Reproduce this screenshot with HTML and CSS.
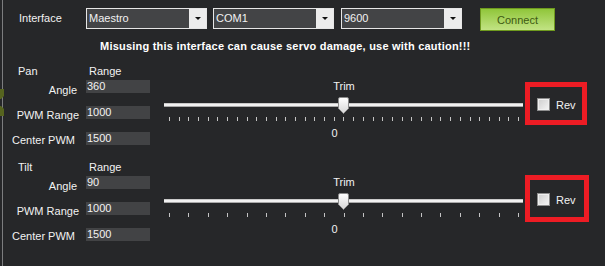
FILE: index.html
```html
<!DOCTYPE html>
<html lang="en">
<head>
    <meta charset="UTF-8">
    <title>Antenna Tracker</title>
    <link rel="stylesheet" href="styles.css">
</head>
<body>
    <div class="page">
        <div class="edge">
            <svg width="4" height="266" viewBox="0 0 4 266">
                <rect x="2" y="0" width="1" height="266" fill="#7c7d7f"/>
                <path d="M0 89 H4 V96 L1 99 H0 Z" fill="#56641f"/>
                <path d="M0 106 H1 L4 109 V116 H0 Z" fill="#56641f"/>
            </svg>
        </div>
        <div class="main">
            <div class="toolbar">
                <span class="iface">Interface</span>
                <div class="combo"><span>Maestro</span><i class="drop"></i></div>
                <div class="combo"><span>COM1</span><i class="drop"></i></div>
                <div class="combo"><span>9600</span><i class="drop"></i></div>
                <button class="connect">Connect</button>
            </div>
            <p class="warning">Misusing this interface can cause servo damage, use with caution!!!</p>

            <!-- Pan axis -->
            <section class="axis">
                <div class="fields">
                    <div class="head"><span>Pan</span><span>Range</span></div>
                    <div class="row"><label class="angle">Angle</label><div class="field">360</div></div>
                    <div class="row"><label class="pwm">PWM Range</label><div class="field">1000</div></div>
                    <div class="row"><label class="center">Center PWM</label><div class="field">1500</div></div>
                </div>
                <div class="trim">
                    <div class="trim-label">Trim</div>
                    <div class="slider">
                        <div class="track"></div>
                        <svg class="thumb" width="11" height="17" viewBox="0 0 11 17">
                            <defs>
                                <linearGradient id="thumbFill" x1="0" y1="0" x2="0" y2="1">
                                    <stop offset="0" stop-color="#ffffff"/>
                                    <stop offset="1" stop-color="#d6d6d6"/>
                                </linearGradient>
                            </defs>
                            <path d="M0.5 2 Q0.5 0.5 2 0.5 H9 Q10.5 0.5 10.5 2 V11.5 L5.5 16.5 L0.5 11.5 Z" fill="url(#thumbFill)" stroke="#8b8b8b"/>
                        </svg>
                    </div>
                    <div class="ticks pan-ticks"></div>
                    <div class="value">0</div>
                </div>
                <div class="rev rev-pan"><span class="check"></span>Rev</div>
            </section>

            <!-- Tilt axis -->
            <section class="axis">
                <div class="fields">
                    <div class="head"><span>Tilt</span><span>Range</span></div>
                    <div class="row"><label class="angle">Angle</label><div class="field">90</div></div>
                    <div class="row"><label class="pwm">PWM Range</label><div class="field">1000</div></div>
                    <div class="row"><label class="center">Center PWM</label><div class="field">1500</div></div>
                </div>
                <div class="trim">
                    <div class="trim-label">Trim</div>
                    <div class="slider">
                        <div class="track"></div>
                        <svg class="thumb" width="11" height="17" viewBox="0 0 11 17">
                            <path d="M0.5 2 Q0.5 0.5 2 0.5 H9 Q10.5 0.5 10.5 2 V11.5 L5.5 16.5 L0.5 11.5 Z" fill="url(#thumbFill)" stroke="#8b8b8b"/>
                        </svg>
                    </div>
                    <div class="ticks tilt-ticks"></div>
                    <div class="value">0</div>
                </div>
                <div class="rev rev-tilt"><span class="check"></span>Rev</div>
            </section>
        </div>
    </div>
</body>
</html>
```

FILE: styles.css
```css
body {
    margin: 0;
    background-color: #262729;
    color: #f2f2f2;
    font-family: 'Liberation Sans', Arial, sans-serif;
    font-size: 11px;
    overflow: hidden;
}
.page {
    display: flex;
    width: 605px;
    height: 266px;
}
.edge {
    width: 4px;
    flex: none;
}
.edge svg {
    display: block;
}
.main {
    flex: 1;
    padding-top: 8px;
}
.toolbar {
    display: flex;
    align-items: flex-start;
    padding-left: 15px;
    height: 23px;
}
.iface {
    width: 67px;
    line-height: 21px;
}
.combo {
    width: 121px;
    height: 21px;
    box-sizing: border-box;
    border: 1px solid #e6e6e6;
    background: #434446;
    display: flex;
    margin-right: 6px;
}
.combo + .combo {
    width: 121px;
    margin-right: 7px;
}
.combo + .combo + .combo {
    margin-right: 18px;
}
.combo span {
    flex: 1;
    line-height: 19px;
    padding-left: 2px;
}
.drop {
    width: 17px;
    background: #ececec;
    position: relative;
}
.drop::after {
    content: '';
    position: absolute;
    left: 6px;
    top: 8px;
    border-left: 3px solid transparent;
    border-right: 3px solid transparent;
    border-top: 3px solid #111;
}
.connect {
    width: 75px;
    height: 23px;
    margin: 0;
    padding: 0;
    border: 1px solid #6f9a1e;
    background: linear-gradient(#90c63a, #c2e384);
    color: #3e5a12;
    font-family: inherit;
    font-size: 11px;
}
.warning {
    margin: 8px 0 0 96px;
    font-weight: bold;
    line-height: 14px;
    letter-spacing: 0.22px;
    color: #ffffff;
}
.axis {
    display: flex;
    align-items: flex-start;
    margin-top: 11px;
    height: 94px;
}
.axis + .axis {
    margin-top: 2px;
}
.fields {
    width: 146px;
}
.head {
    display: grid;
    grid-template-columns: 82px 64px;
    line-height: 14px;
    margin-bottom: 2px;
}
.head span:first-child {
    padding-left: 14px;
}
.head span:last-child {
    padding-left: 3px;
}
.row {
    display: flex;
    height: 26px;
}
.row label {
    width: 82px;
    box-sizing: border-box;
    text-align: right;
    line-height: 14px;
    padding-top: 3px;
}
.row label.angle {
    padding-right: 9px;
}
.row label.pwm {
    padding-right: 7px;
    padding-top: 2px;
}
.row label.center {
    padding-right: 11px;
    padding-top: 1px;
}
.field {
    width: 64px;
    height: 13px;
    line-height: 13px;
    background: #424345;
    padding-left: 1px;
    box-sizing: border-box;
    overflow: hidden;
}
.trim {
    width: 359px;
    margin-left: 14px;
    padding-top: 15px;
}
.trim-label {
    text-align: center;
    line-height: 14px;
    padding-left: 1px;
}
.slider {
    position: relative;
    height: 16px;
    margin-top: 4px;
}
.track {
    position: absolute;
    left: 0;
    right: 0;
    top: 6px;
    height: 4px;
    box-sizing: border-box;
    background: #f2f2f2;
    border-top: 1px solid #c9c9c9;
    border-bottom: 1px solid #a9a9a9;
}
.thumb {
    position: absolute;
    left: 174px;
    top: 0;
}
.ticks {
    margin: 4px 0 0 5px;
    width: 350px;
    height: 4px;
}
.pan-ticks {
    background: repeating-linear-gradient(to right, #c4c4c4 0 1px, transparent 1px 9.6944px);
}
.tilt-ticks {
    background: repeating-linear-gradient(to right, #c4c4c4 0 1px, transparent 1px 19.3889px);
}
.value {
    margin-top: 5px;
    line-height: 14px;
    text-align: center;
    padding-right: 18px;
}
.rev {
    margin-left: 2px;
    box-sizing: border-box;
    border: 5px solid #ed1c24;
    display: flex;
    align-items: center;
    padding: 2px 0 0 7px;
    gap: 6px;
}
.rev-pan {
    margin-top: 18px;
    width: 62px;
    height: 43px;
}
.rev-tilt {
    margin-top: 15px;
    width: 64px;
    height: 47px;
}
.check {
    width: 13px;
    height: 13px;
    box-sizing: border-box;
    border: 1px solid #8e8e8e;
    background: linear-gradient(135deg, #cdcdcd, #f5f5f5);
    box-shadow: inset 0 0 0 1px #efefef;
}
```
